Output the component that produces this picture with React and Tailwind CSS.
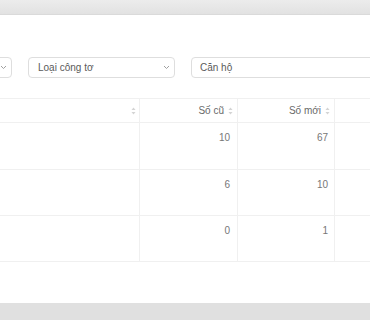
import React from "react";

const rows = [
  { cu: 10, moi: 67 },
  { cu: 6, moi: 10 },
  { cu: 0, moi: 1 },
];

function Chevron() {
  return (
    <svg width="7" height="5" viewBox="0 0 7 5" className="shrink-0">
      <path d="M1 1l2.5 2.5L6 1" fill="none" stroke="#a0a0a0" strokeWidth="1" />
    </svg>
  );
}

function Sorter() {
  return (
    <svg width="5" height="8" viewBox="0 0 5 8" className="shrink-0">
      <path d="M2.5 0.5L4.5 3H0.5z" fill="#d4d4d4" />
      <path d="M2.5 7.5L4.5 5H0.5z" fill="#d4d4d4" />
    </svg>
  );
}

export default function App() {
  return (
    <div
      className="w-[370px] h-[320px] overflow-hidden flex flex-col bg-[#e2e2e2]"
      style={{ fontFamily: '"Liberation Sans", Arial, sans-serif' }}
    >
      {/* thanh xám phía trên */}
      <div className="h-[15px] bg-gradient-to-b from-[#ececec] to-[#e2e2e2] border-b border-[#dadada]" />

      <div className="h-[288px] bg-white flex flex-col overflow-hidden">
        {/* Bộ lọc */}
        <div className="mt-[42px] flex gap-[16px] ml-[-48px]">
          <div className="w-[60px] h-[21px] border border-[#dedede] rounded-[4px] flex items-center justify-end pr-[4px] shrink-0">
            <Chevron />
          </div>
          <div className="w-[147px] h-[21px] border border-[#dedede] rounded-[4px] flex items-center justify-between pl-[9px] pr-[4px] shrink-0">
            <span className="text-[10px] text-[#5a5a5a]">Loại công tơ</span>
            <Chevron />
          </div>
          <div className="w-[220px] h-[21px] border border-[#dedede] rounded-[4px] flex items-center pl-[8px] shrink-0">
            <span className="text-[10px] text-[#5a5a5a]">Căn hộ</span>
          </div>
        </div>

        {/* Bảng */}
        <div className="mt-[20px] border-t border-[#f0f0f0] grid grid-cols-[140px_98px_97px_1fr] text-[10px]">
          <div className="h-[24px] border-b border-r border-[#f0f0f0] flex items-center justify-end pr-[3px]">
            <Sorter />
          </div>
          <div className="h-[24px] border-b border-r border-[#f0f0f0] flex items-center justify-end gap-[4px] pr-[4px] text-[#6a6a6a]">
            <span>Số cũ</span>
            <Sorter />
          </div>
          <div className="h-[24px] border-b border-r border-[#f0f0f0] flex items-center justify-end gap-[4px] pr-[4px] text-[#6a6a6a]">
            <span>Số mới</span>
            <Sorter />
          </div>
          <div className="h-[24px] border-b border-[#f0f0f0]" />

          {rows.map((r, i) => (
            <React.Fragment key={i}>
              <div className={`${i === 0 ? "h-[47px]" : "h-[46px]"} border-b border-r border-[#f0f0f0]`} />
              <div className="border-b border-r border-[#f0f0f0] text-right pr-[7px] pt-[7px] text-[#777]">{r.cu}</div>
              <div className="border-b border-r border-[#f0f0f0] text-right pr-[6px] pt-[7px] text-[#777]">{r.moi}</div>
              <div className="border-b border-[#f0f0f0]" />
            </React.Fragment>
          ))}
        </div>
      </div>

      <div className="flex-1 bg-[#e0e0e0]" />
    </div>
  );
}
